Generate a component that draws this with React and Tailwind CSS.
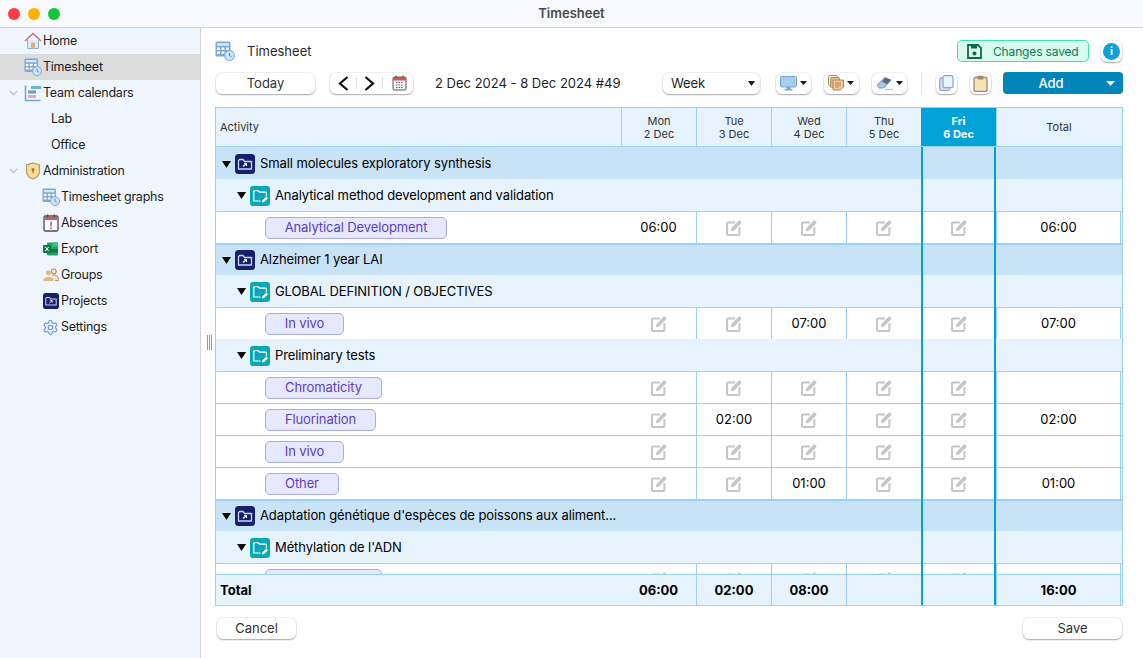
import React from "react";

const TimesheetIcon = ({ s = 18 }) => (
  <svg width={s} height={s} viewBox="0 0 20 20" className="shrink-0">
    <rect x="0.5" y="0.5" width="15" height="15" rx="1.5" fill="#7ea6d3" />
    <rect x="2" y="2.2" width="12" height="2.6" fill="#d7e6f6" />
    <rect x="2" y="6.5" width="3" height="2.3" fill="#fff" />
    <rect x="6.5" y="6.5" width="3" height="2.3" fill="#fff" />
    <rect x="11" y="6.5" width="3" height="2.3" fill="#fff" />
    <rect x="2" y="10.5" width="3" height="2.3" fill="#fff" />
    <rect x="6.5" y="10.5" width="3" height="2.3" fill="#fff" />
    <circle cx="14.5" cy="14.5" r="5" fill="#cfe3f7" stroke="#6fa6dc" />
    <path d="M14.5 11.8V14.6L16.5 15.8" stroke="#4e86c0" fill="none" />
  </svg>
);
const HomeIcon = () => (
  <svg width="18" height="18" viewBox="0 0 18 18" className="shrink-0">
    <path d="M3.5 8V16.5H14.5V8" fill="#dcebf8" stroke="#8fb2d6" />
    <path d="M1 9L9 1.5L17 9" fill="none" stroke="#cf6f75" strokeWidth="1.5" />
    <rect x="7" y="10.5" width="4" height="6" rx="1" fill="#e9a978" />
  </svg>
);
const GanttIcon = () => (
  <svg width="18" height="18" viewBox="0 0 18 18" className="shrink-0">
    <path d="M1.5 1.5V16.5H16.5" fill="none" stroke="#7ea6d3" strokeWidth="1.6" />
    <rect x="7" y="2" width="10" height="3" fill="#69b4d9" />
    <rect x="4" y="6.5" width="8" height="3" fill="#7e97b9" />
    <rect x="4" y="11" width="8" height="3" fill="#e6a6b8" />
  </svg>
);
const ShieldIcon = () => (
  <svg width="16" height="18" viewBox="0 0 16 18" className="shrink-0">
    <path d="M8 1L14.5 3V9C14.5 13 11.5 15.8 8 17C4.5 15.8 1.5 13 1.5 9V3Z" fill="#f7dc9b" stroke="#b99a63" strokeWidth="1.2" />
    <circle cx="8" cy="7.5" r="1.5" fill="#9a7b45" />
    <rect x="7.4" y="8" width="1.2" height="3.2" fill="#9a7b45" />
  </svg>
);
const AbsIcon = () => (
  <svg width="16" height="18" viewBox="0 0 16 18" className="shrink-0">
    <rect x="1" y="2" width="14" height="15" rx="1.5" fill="#fff" stroke="#4b4b52" strokeWidth="1.3" />
    <rect x="1.6" y="2.6" width="12.8" height="3.4" fill="#b5686d" />
    <rect x="4" y="0.5" width="1.2" height="3" fill="#4b4b52" />
    <rect x="10.8" y="0.5" width="1.2" height="3" fill="#4b4b52" />
    <rect x="7.3" y="7.5" width="1.5" height="5" fill="#dc4b4b" />
    <rect x="7.3" y="13.5" width="1.5" height="1.6" fill="#dc4b4b" />
  </svg>
);
const ExcelIcon = () => (
  <svg width="15" height="14" viewBox="0 0 15 14" className="shrink-0">
    <rect x="4" y="0.5" width="11" height="13" rx="1" fill="#21a366" />
    <rect x="9.5" y="0.5" width="5.5" height="4.3" fill="#33c481" />
    <rect x="4" y="7" width="11" height="3.5" fill="#107c41" />
    <rect x="0" y="3" width="8" height="8" rx="1" fill="#0f7b45" />
    <path d="M2.3 5L5.6 9M5.6 5L2.3 9" stroke="#fff" strokeWidth="1" />
  </svg>
);
const GroupsIcon = () => (
  <svg width="16" height="14" viewBox="0 0 16 14" className="shrink-0">
    <circle cx="10.8" cy="3.4" r="2.4" fill="#f5e6cc" stroke="#b9966a" strokeWidth="1.2" />
    <path d="M9 7.4C12 6.2 15.5 7.5 15.5 11.4V12.5H12" fill="#f3e2c6" stroke="#b9966a" />
    <circle cx="5.4" cy="4.8" r="2.5" fill="#e3b681" />
    <path d="M0.5 13V11.5C0.5 8 10.5 8 10.5 11.5V13Z" fill="#e3b681" />
  </svg>
);
const ProjectIcon = ({ s = 20 }) => (
  <svg width={s} height={s} viewBox="0 0 20 20" className="shrink-0">
    <rect width="20" height="20" rx="3.5" fill="#14206e" />
    <path d="M3.5 6.5V15H16.5V7.5H9.5L8 5.5H4.5Z" fill="none" stroke="#c8d4ee" strokeWidth="1.3" />
    <path d="M8 12.5L11.5 9.5M9 9.5H11.5V12" stroke="#fff" strokeWidth="1.1" fill="none" />
  </svg>
);
const SubIcon = () => (
  <svg width="20" height="20" viewBox="0 0 20 20" className="shrink-0">
    <rect width="20" height="20" rx="3" fill="#07a8b6" />
    <path d="M10.5 15H3.8V5.5C3.8 5 4.2 4.6 4.6 4.6H8L9.4 6.2H15.6C16.1 6.2 16.4 6.6 16.4 7V10.2" fill="none" stroke="#fff" strokeWidth="1.2" />
    <path d="M12 16.5L12.5 14.2L16.4 10.6L18 12.2L14.2 16Z" fill="#fff" />
  </svg>
);
const GearIcon = () => (
  <svg width="17" height="17" viewBox="0 0 24 24" fill="#e3eefa" stroke="#6f9fd3" strokeWidth="1.7" className="shrink-0">
    <path d="M9.67 4.14a2.34 2.34 0 0 1 4.66 0 2.34 2.34 0 0 0 3.32 1.91 2.34 2.34 0 0 1 2.33 4.04 2.34 2.34 0 0 0 0 3.82 2.34 2.34 0 0 1-2.33 4.04 2.34 2.34 0 0 0-3.32 1.91 2.34 2.34 0 0 1-4.66 0 2.34 2.34 0 0 0-3.32-1.91 2.34 2.34 0 0 1-2.33-4.04 2.34 2.34 0 0 0 0-3.82 2.34 2.34 0 0 1 2.33-4.04 2.34 2.34 0 0 0 3.32-1.91Z" />
    <circle cx="12" cy="12" r="3" fill="#fff" />
  </svg>
);
const Chevron = () => (
  <svg width="9" height="6" viewBox="0 0 9 6" className="shrink-0">
    <path d="M0.8 0.8L4.5 4.6L8.2 0.8" fill="none" stroke="#b9bdc2" strokeWidth="1.2" />
  </svg>
);
const Caret = ({ c = "#1a1a1a", w = 8, h = 5 }) => (
  <svg width={w} height={h} viewBox="0 0 8 5" className="shrink-0" preserveAspectRatio="none">
    <path d="M0 0H8L4 5Z" fill={c} />
  </svg>
);
const Tri = () => (
  <svg width="9" height="7" viewBox="0 0 9 7" className="shrink-0">
    <path d="M0 0H9L4.5 7Z" fill="#000" />
  </svg>
);
const EditIcon = () => (
  <svg width="16" height="16" viewBox="0 0 16 16">
    <path d="M9 2.6H2.2C1.5 2.6 1 3.1 1 3.8V13.9C1 14.6 1.5 15 2.2 15H12.3C13 15 13.4 14.6 13.4 13.9V7" fill="none" stroke="#c6c6c6" strokeWidth="2" />
    <path d="M4.8 11.2L5.4 8L12.3 1C12.9 0.4 13.8 0.4 14.5 1L15 1.5C15.6 2.2 15.6 3 15 3.6L8 10.6Z" fill="#c6c6c6" />
  </svg>
);

const btn = "bg-white rounded-[6px] shadow-[0_0_0_1px_rgba(0,0,0,0.05),0_1px_1.5px_rgba(0,0,0,0.3)] flex items-center";

const side = [
  { icon: <HomeIcon />, t: "Home", pl: "pl-[24px]" },
  { icon: <TimesheetIcon />, t: "Timesheet", pl: "pl-[24px]", sel: true },
  { icon: <GanttIcon />, t: "Team calendars", pl: "pl-[9px]", chev: true },
  { t: "Lab", pl: "pl-[51px]" },
  { t: "Office", pl: "pl-[51px]" },
  { icon: <ShieldIcon />, t: "Administration", pl: "pl-[9px]", chev: true },
  { icon: <TimesheetIcon />, t: "Timesheet graphs", pl: "pl-[42px]" },
  { icon: <AbsIcon />, t: "Absences", pl: "pl-[42px]" },
  { icon: <ExcelIcon />, t: "Export", pl: "pl-[42px]" },
  { icon: <GroupsIcon />, t: "Groups", pl: "pl-[42px]" },
  { icon: <ProjectIcon s={16} />, t: "Projects", pl: "pl-[42px]" },
  { icon: <GearIcon />, t: "Settings", pl: "pl-[42px]" },
];

const gridCols = "grid grid-cols-[405px_75px_75px_75px_75px_75px_125px]";
const line = "border-[#9ad2f0]";

function TaskRow({ name, w, vals = [], total }) {
  return (
    <div className={`${gridCols} h-[32px] shrink-0 bg-white border-t ${line}`}>
      <div className="flex items-center pl-[49px] tracking-[-0.1px]">
        <div className={`h-[22px] flex items-center justify-center rounded-[5px] border border-[#a8a8f4] bg-[#e6e8fd] text-[#5b3fc4] ${w}`}>{name}</div>
      </div>
      {[0, 1, 2, 3, 4].map((i) => (
        <div key={i} className={`flex items-center justify-center ${i > 0 ? `border-l ${line}` : ""}`}>
          {vals[i] ? <span className="text-black">{vals[i]}</span> : <EditIcon />}
        </div>
      ))}
      <div className={`flex items-center justify-center border-x ${line} text-black`}>{total}</div>
    </div>
  );
}
function ProjectRow({ name, first }) {
  return (
    <div className={`h-[32px] shrink-0 bg-[#c8e3f6] flex items-center pl-[6px] border-t-2 ${first ? "border-[#c8e3f6]" : line}`}>
      <span className="w-[9px] mr-[4px] flex"><Tri /></span>
      <ProjectIcon />
      <span className="ml-[5px] text-black truncate tracking-[-0.1px]">{name}</span>
    </div>
  );
}
function SubRow({ name }) {
  return (
    <div className="h-[32px] shrink-0 bg-[#e6f2fc] flex items-center pl-[21px] pt-px">
      <span className="w-[9px] mr-[4px] flex"><Tri /></span>
      <SubIcon />
      <span className="ml-[5px] text-black tracking-[-0.1px]">{name}</span>
    </div>
  );
}

function Head({ a, b }) {
  return (
    <div className={`flex flex-col items-center justify-center pt-[2px] border-l ${line} text-[11px] leading-[13px] text-[#333]`}>
      <span>{a}</span>
      <span>{b}</span>
    </div>
  );
}

export default function App() {
  return (
    <div className="w-[1143px] h-[658px] overflow-hidden flex flex-col bg-white text-[13px] text-[#1e1e1e] font-['Inter','Liberation_Sans',sans-serif]">
      <div className="h-[28px] shrink-0 relative flex items-center justify-center bg-[#f7f9fc] border-b border-[#d6d6d6]">
        <div className="absolute left-[8px] top-[8px] flex gap-[8px]">
          <span className="w-[12px] h-[12px] rounded-full bg-[#fe3b3f]" />
          <span className="w-[12px] h-[12px] rounded-full bg-[#feb100]" />
          <span className="w-[12px] h-[12px] rounded-full bg-[#0fc93a]" />
        </div>
        <span className="font-semibold text-[#4a4a4a]">Timesheet</span>
      </div>
      <div className="flex-1 flex min-h-0">
        <aside className="w-[201px] shrink-0 bg-[#f0f6fd] border-r border-[#d2d5d8] text-[12.5px] tracking-[-0.25px] text-[#1c1c1c]">
          {side.map((r) => (
            <div key={r.t} className={`h-[26px] flex items-center ${r.pl} ${r.sel ? "bg-[#dcdcdc]" : ""}`}>
              {r.chev && <span className="w-[15px] flex"><Chevron /></span>}
              {r.icon && <span className="w-[19px] flex justify-center -ml-[1px] mr-[1px]">{r.icon}</span>}
              <span className="pt-px">{r.t}</span>
            </div>
          ))}
        </aside>
        <main className="flex-1 min-w-0 relative flex flex-col pl-[14px] pr-[20px] pt-[12px]">
          <div className="absolute left-[6px] top-[307px] flex gap-[1px] h-[15px]">
            <span className="w-px bg-[#9b9b9b]" />
            <span className="w-px bg-[#9b9b9b]" />
            <span className="w-px bg-[#9b9b9b]" />
          </div>
          <div className="h-[22px] shrink-0 flex items-center">
            <TimesheetIcon s={20} />
            <span className="ml-[12px] pt-px text-[#2a2a2a]">Timesheet</span>
            <div className="ml-auto flex items-center gap-[12px]">
              <div className="w-[132px] h-[22px] rounded-[5px] border border-[#38e8ab] bg-[#d8fbee] text-[#0f7a58] flex items-center pl-[9px] gap-[11px] text-[12px] tracking-[-0.15px]">
                <svg width="15" height="15" viewBox="0 0 15 15" className="shrink-0">
                  <path d="M1 1H11L14 4V14H1Z" fill="none" stroke="#0c6a4c" strokeWidth="1.8" />
                  <rect x="4" y="1" width="6" height="3.5" fill="#0c6a4c" />
                  <circle cx="7.5" cy="9.5" r="2" fill="#0c6a4c" />
                </svg>
                <span className="pt-px">Changes saved</span>
              </div>
              <div className={`${btn} justify-center w-[21px] h-[21px] mr-px`}>
                <span className="w-[17px] h-[17px] rounded-full bg-[#0ea2dc] text-white text-[11px] font-bold flex items-center justify-center">i</span>
              </div>
            </div>
          </div>
          <div className="h-[22px] mt-[10px] shrink-0 flex items-center">
            <div className={`${btn} justify-center w-[99px] h-[21px] ml-px pt-px text-[#333]`}>Today</div>
            <div className={`${btn} w-[83px] h-[21px] ml-[15px] pl-[8px]`}>
              <svg width="11" height="15" viewBox="0 0 11 15" className="shrink-0"><path d="M9.5 1L2 7.5L9.5 14" fill="none" stroke="#111" strokeWidth="2.2" /></svg>
              <span className="w-px h-[12px] ml-[7px] bg-[#e2e2e2]" />
              <svg width="11" height="15" viewBox="0 0 11 15" className="ml-[7px] shrink-0"><path d="M1.5 1L9 7.5L1.5 14" fill="none" stroke="#111" strokeWidth="2.2" /></svg>
              <span className="w-px h-[12px] ml-[7px] bg-[#e2e2e2]" />
              <svg width="15" height="16" viewBox="0 0 15 16" className="ml-[9px] shrink-0">
                <rect x="1" y="2" width="13" height="13" rx="1.5" fill="#f3f3f3" stroke="#555" />
                <rect x="1" y="2" width="13" height="3.5" fill="#c65a5a" />
                <path d="M4 7.5h7M4 10h7M4 12.5h7" stroke="#666" strokeDasharray="1.5 1" />
                <path d="M4 0.5V3M11 0.5V3" stroke="#555" />
              </svg>
            </div>
            <span className="ml-[22px] pt-px text-[#1e1e1e]">2 Dec 2024 - 8 Dec 2024 #49</span>
            <div className="ml-auto flex items-center">
              <div className={`${btn} justify-between w-[97px] h-[21px] pl-[8px] pr-[5px] tracking-[-0.1px]`}>
                <span className="pt-px text-[#1e1e1e]">Week</span>
                <Caret w={7} h={5} />
              </div>
              <div className={`${btn} w-[35px] h-[21px] ml-[16px] pl-[4px] gap-[3px]`}>
                <svg width="17" height="15" viewBox="0 0 17 15" className="shrink-0"><rect x="0.5" y="0.5" width="16" height="10.5" rx="1" fill="#a9cdf0" stroke="#7fa6d2" /><rect x="6.5" y="11" width="4" height="2.5" fill="#7fa6d2" /><rect x="4.5" y="13" width="8" height="1.5" fill="#7fa6d2" /></svg>
                <Caret w={7} h={4} />
              </div>
              <div className={`${btn} w-[35px] h-[21px] ml-[13px] pl-[4px] gap-[3px]`}>
                <svg width="16" height="16" viewBox="0 0 16 16" className="shrink-0"><rect x="0.5" y="0.5" width="9" height="10" rx="1" fill="none" stroke="#a98a60" /><rect x="2.5" y="2.5" width="9" height="10" rx="1" fill="#e0c08a" stroke="#a98a60" /><path d="M5 5H15.5V12L12.5 15H5Z" fill="#f2c992" stroke="#a98a60" /><path d="M7 8H13M7 10H13M7 12H11" stroke="#a98a60" /></svg>
                <Caret w={7} h={4} />
              </div>
              <div className={`${btn} w-[35px] h-[21px] ml-[13px] pl-[4px] gap-[2px]`}>
                <svg width="18" height="15" viewBox="0 0 18 15" className="shrink-0"><path d="M1 9L9 1.5L15 4L8 12H3Z" fill="#a6c4e6" stroke="#7fa0c8" /><path d="M6 5.5L9 1.5L15 4L11 8.3Z" fill="#5c6a80" /><path d="M9 13.5H17" stroke="#a6c4e6" strokeWidth="1.2" /></svg>
                <Caret w={7} h={4} />
              </div>
              <span className="w-px h-[22px] bg-[#e3e3e3] ml-[14px]" />
              <div className={`${btn} justify-center w-[21px] h-[21px] ml-[14px]`}>
                <svg width="15" height="16" viewBox="0 0 15 16"><rect x="0.7" y="3" width="10" height="12.3" rx="1.5" fill="#d9e4f2" stroke="#8fa9cc" strokeWidth="1.3" /><rect x="4" y="0.7" width="10" height="12" rx="1.5" fill="#eef4fb" stroke="#8fa9cc" strokeWidth="1.3" /></svg>
              </div>
              <div className={`${btn} justify-center w-[21px] h-[21px] ml-[13px]`}>
                <svg width="15" height="17" viewBox="0 0 15 17"><rect x="1" y="2.5" width="13" height="14" rx="1.5" fill="#f5e2b8" stroke="#a08a68" strokeWidth="1.3" /><rect x="4.5" y="0.8" width="6" height="3.6" rx="0.8" fill="#a08a68" /></svg>
              </div>
              <div className="w-[120px] h-[22px] ml-[12px] rounded-[4px] bg-[#0085b9] text-white flex items-center">
                <span className="w-[96px] pt-px text-center font-medium">Add</span>
                <span className="ml-[7px] flex"><Caret c="#fff" w={9} h={5} /></span>
              </div>
            </div>
          </div>
          <div className={`mt-[13px] h-[499px] shrink-0 border ${line} flex flex-col overflow-hidden`}>
            <div className={`${gridCols} h-[39px] shrink-0 bg-[#e6f2fc] border-b ${line}`}>
              <div className="flex items-center pl-[4px] text-[11px] text-[#333]">Activity</div>
              <Head a="Mon" b="2 Dec" />
              <Head a="Tue" b="3 Dec" />
              <Head a="Wed" b="4 Dec" />
              <Head a="Thu" b="5 Dec" />
              <div className="flex flex-col items-center justify-center pt-[2px] bg-[#00a2d8] text-white font-bold text-[11px] leading-[13px]">
                <span>Fri</span>
                <span>6 Dec</span>
              </div>
              <div className={`flex items-center justify-center border-l ${line} text-[11px] text-[#333]`}>Total</div>
            </div>
            <div className="relative flex-1 min-h-0 flex flex-col">
              <div className="flex-1 min-h-0 overflow-hidden flex flex-col">
                <ProjectRow first name="Small molecules exploratory synthesis" />
                <SubRow name="Analytical method development and validation" />
                <TaskRow name="Analytical Development" w="w-[182px]" vals={["06:00"]} total="06:00" />
                <ProjectRow name="Alzheimer 1 year LAI" />
                <SubRow name="GLOBAL DEFINITION / OBJECTIVES" />
                <TaskRow name="In vivo" w="w-[79px]" vals={[null, null, "07:00"]} total="07:00" />
                <SubRow name="Preliminary tests" />
                <TaskRow name="Chromaticity" w="w-[117px]" />
                <TaskRow name="Fluorination" w="w-[111px]" vals={[null, "02:00"]} total="02:00" />
                <TaskRow name="In vivo" w="w-[79px]" />
                <TaskRow name="Other" w="w-[74px]" vals={[null, null, "01:00"]} total="01:00" />
                <ProjectRow name="Adaptation génétique d'espèces de poissons aux aliment..." />
                <SubRow name="Méthylation de l'ADN" />
                <TaskRow name="" w="w-[117px]" />
              </div>
              <div className={`${gridCols} h-[31px] shrink-0 bg-[#e6f2fc] border-t ${line} font-bold text-black`}>
                <div className="flex items-center pl-[4px] pt-px">Total</div>
                {["06:00", "02:00", "08:00", "", ""].map((v, i) => (
                  <div key={i} className={`flex items-center justify-center pt-px ${i > 0 ? `border-l ${line}` : ""}`}>{v}</div>
                ))}
                <div className={`flex items-center justify-center pt-px border-x ${line}`}>16:00</div>
              </div>
              <div className="absolute top-0 bottom-0 left-[705px] w-[75px] border-x-2 border-[#00a2d8] pointer-events-none" />
            </div>
          </div>
          <div className="mt-[12px] flex justify-between">
            <div className={`${btn} justify-center w-[79px] h-[21px] ml-[2px] pt-px text-[#333]`}>Cancel</div>
            <div className={`${btn} justify-center w-[99px] h-[21px] mr-px pt-px text-[#333]`}>Save</div>
          </div>
        </main>
      </div>
    </div>
  );
}
